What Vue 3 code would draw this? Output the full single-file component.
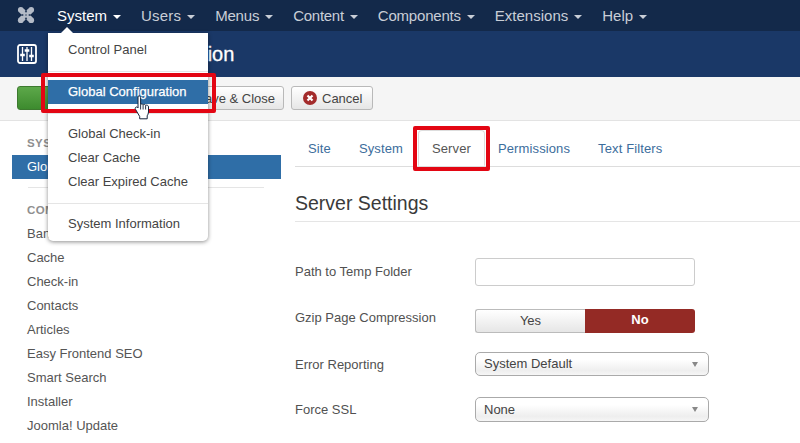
<script setup>
const nav = ['System', 'Users', 'Menus', 'Content', 'Components', 'Extensions', 'Help']
const tabs = ['Site', 'System', 'Server', 'Permissions', 'Text Filters']
const comps = ['Banners', 'Cache', 'Check-in', 'Contacts', 'Articles', 'Easy Frontend SEO', 'Smart Search', 'Installer', 'Joomla! Update']
</script>

<template>
  <div class="page">
    <header class="navbar">
      <svg class="logo" viewBox="0 0 18 18" width="18" height="18">
        <path d="M4.500 4.500 L13.500 13.500 M13.500 4.500 L4.500 13.500" fill="none" stroke="#b4bbc7" stroke-width="6" />
        <g fill="#b4bbc7">
          <circle cx="3.800" cy="3.800" r="2.900" />
          <circle cx="14.200" cy="3.800" r="2.900" />
          <circle cx="3.800" cy="14.200" r="2.900" />
          <circle cx="14.200" cy="14.200" r="2.900" />
        </g>
        <g fill="#13294a" opacity=".8">
          <circle cx="9" cy="5.400" r="1.100" />
          <circle cx="9" cy="12.600" r="1.100" />
          <circle cx="5.400" cy="9" r="1.100" />
          <circle cx="12.600" cy="9" r="1.100" />
          <circle cx="9" cy="9" r=".8" />
        </g>
      </svg>
      <nav class="menu">
        <span v-for="(n, i) in nav" :key="n" class="menu-item" :class="{ open: i === 0 }">{{ n }}<i class="caret"></i></span>
      </nav>
    </header>

    <div class="subhead">
      <svg class="cfg-icon" viewBox="0 0 20 20" width="20" height="20">
        <rect x="1" y="1" width="18" height="18" rx="2" fill="none" stroke="#fff" stroke-width="1.800" />
        <path d="M5.500 3v14M10 3v14M14.500 3v14" stroke="#fff" stroke-width="1.300" />
        <path d="M3.200 11h4.600M7.700 6.500h4.600M12.200 12h4.600" stroke="#fff" stroke-width="2.600" />
      </svg>
      <h1 class="title">Global Configuration</h1>
    </div>

    <div class="toolbar">
      <button class="btn btn-green"></button>
      <button class="btn btn-save">Save &amp; Close</button>
      <button class="btn btn-cancel">
        <svg class="x-badge" viewBox="0 0 14 14" width="14" height="14">
          <circle cx="7" cy="7" r="7" fill="#a32b2b" />
          <path d="M4.500 4.500l5 5M9.500 4.500l-5 5" stroke="#fff" stroke-width="2.200" />
        </svg>
        Cancel
      </button>
    </div>

    <div class="body">
      <aside class="side">
        <div class="side-head first">SYSTEM</div>
        <div class="side-active">Global Configuration</div>
        <div class="side-rule"></div>
        <div class="side-head second">COMPONENT</div>
        <div v-for="c in comps" :key="c" class="side-link">{{ c }}</div>
      </aside>

      <main class="main">
        <div class="tabs">
          <span v-for="t in tabs" :key="t" class="tab" :class="{ active: t === 'Server' }">{{ t }}</span>
        </div>
        <h2 class="legend">Server Settings</h2>
        <div class="form">
          <div class="row r1">
            <label>Path to Temp Folder</label>
            <div class="text-input"></div>
          </div>
          <div class="row r2">
            <label>Gzip Page Compression</label>
            <div class="toggle"><span class="yes">Yes</span><span class="no">No</span></div>
          </div>
          <div class="row r3">
            <label>Error Reporting</label>
            <div class="select">System Default<i class="sel-arrow"></i></div>
          </div>
          <div class="row r4">
            <label>Force SSL</label>
            <div class="select">None<i class="sel-arrow"></i></div>
          </div>
        </div>
      </main>
    </div>

    <div class="dropdown">
      <i class="dd-tip"></i>
      <div class="dd-item">Control Panel</div>
      <div class="dd-rule"></div>
      <div class="dd-item hot">Global Configuration</div>
      <div class="dd-rule"></div>
      <div class="dd-item">Global Check-in</div>
      <div class="dd-item">Clear Cache</div>
      <div class="dd-item">Clear Expired Cache</div>
      <div class="dd-rule"></div>
      <div class="dd-item">System Information</div>
    </div>

    <div class="mark mark-menu"></div>
    <div class="mark mark-tab"></div>

    <svg class="hand" viewBox="0 0 18 25" width="18" height="25">
      <path d="M4 1.500c.9-1 2.600-.6 2.600 1v7c.9-.8 2-.6 2.500.3.900-.7 2.100-.4 2.500.5 1-.5 2.900 0 2.900 1.500v5.200c0 1.700-.7 2.700-1.300 3.800v3H5.700v-2.300L1.600 14.500c-1.200-1.500.4-3.200 1.900-2.200L4 13Z" fill="#fff" stroke="#14233b" stroke-width="1" />
      <path d="M6.600 9.500v5M9.100 10v4.500M11.600 10.500v4" stroke="#14233b" stroke-width=".9" fill="none" />
    </svg>
  </div>
</template>

<style>
html, body { margin: 0; background: #fff; }
</style>

<style scoped>
.page {
  position: relative;
  width: 800px;
  height: 443px;
  overflow: hidden;
  background: #fff;
  font-family: "Liberation Sans", Arial, sans-serif;
  font-size: 13px;
  color: #515151;
}
.navbar {
  height: 31px;
  box-sizing: border-box;
  background: #13294a;
  display: flex;
  align-items: center;
  padding: 0 0 1px 17px;
}
.logo { flex: none; }
.menu { display: flex; margin-left: 22px; font-size: 15px; color: #c9ced7; }
.menu-item { margin-right: 20px; white-space: nowrap; }
.menu-item.open { color: #fff; }
.menu-item:nth-child(2) { letter-spacing: .2px; }
.menu-item:nth-child(3) { letter-spacing: -.2px; }
.menu-item:nth-child(4) { letter-spacing: -.28px; }
.menu-item:nth-child(5) { letter-spacing: -.2px; }
.caret {
  display: inline-block;
  margin-left: 6px;
  vertical-align: 2px;
  border-left: 4px solid transparent;
  border-right: 4px solid transparent;
  border-top: 4px solid currentColor;
}
.subhead {
  height: 46px;
  background: #1a3867;
  display: flex;
  align-items: center;
  padding-left: 17px;
}
.cfg-icon { flex: none; }
.title {
  margin: 0 0 0 15px;
  font-size: 20px;
  font-weight: 400;
  color: #fff;
  -webkit-text-stroke: .3px #fff;
  white-space: nowrap;
}
.toolbar {
  height: 44px;
  box-sizing: border-box;
  background: #f5f5f5;
  border-bottom: 1px solid #e3e3e3;
  display: flex;
  align-items: center;
  padding: 0 0 1px 17px;
}
.btn {
  height: 24px;
  box-sizing: border-box;
  border: 1px solid #b9b9b9;
  border-radius: 3px;
  background: linear-gradient(#fff, #e6e6e6);
  font: 13px "Liberation Sans", Arial, sans-serif;
  color: #444;
  padding: 0;
}
.btn-green {
  width: 70px;
  background: linear-gradient(#5da84a, #3d8b2e);
  border-color: #3d7a2f;
}
.btn-save {
  width: 191px;
  margin-left: 6px;
  text-align: right;
  padding-right: 8px;
}
.btn-cancel {
  width: 82px;
  margin-left: 7px;
  display: flex;
  align-items: center;
  padding-left: 11px;
  gap: 5px;
}
.x-badge { flex: none; }
.body { display: flex; }
.side { width: 281px; flex: none; padding-left: 12px; box-sizing: border-box; }
.side-head {
  padding-left: 15px;
  font-size: 11.500px;
  font-weight: 700;
  color: #8f8f8f;
  letter-spacing: .4px;
  line-height: 17px;
}
.side-head.first { margin-top: 14px; }
.side-head.second { margin-top: 14px; margin-bottom: 3px; }
.side-active {
  margin-top: 3px;
  height: 24px;
  line-height: 24px;
  padding-left: 15px;
  background: #2f6ea7;
  color: #fff;
}
.side-rule { margin: 8px 17px 0 16px; height: 1px; background: #e5e5e5; }
.side-link { height: 24px; line-height: 24px; padding-left: 15px; color: #555; }
.main { flex: 1; padding-left: 14px; min-width: 0; }
.tabs {
  margin-top: 10px;
  height: 36px;
  box-sizing: border-box;
  border-bottom: 1px solid #ddd;
  display: flex;
  align-items: flex-end;
}
.tab {
  height: 35px;
  line-height: 35px;
  padding: 0 14px;
  color: #3c6d9c;
  letter-spacing: .12px;
  box-sizing: border-box;
  white-space: nowrap;
}
.tab:first-child { margin-left: -1px; }
.tab.active {
  height: 36px;
  padding: 0 13px;
  margin: 0 -1px 0 1px;
  border: 1px solid #ddd;
  border-bottom-color: #fff;
  border-radius: 4px 4px 0 0;
  background: #fff;
  color: #555;
}
.legend {
  margin: 0;
  padding: 0;
  height: 55px;
  line-height: 73px;
  box-sizing: border-box;
  border-bottom: 1px solid #e5e5e5;
  font-size: 19.500px;
  font-weight: 400;
  color: #3a3a3a;
}
.form { display: flex; flex-direction: column; }
.row { display: flex; align-items: center; }
.row label { width: 180px; flex: none; color: #515151; }
.r1 { margin-top: 36px; height: 28px; }
.r1 label { margin-bottom: 2px; }
.r2 { margin-top: 23px; height: 24px; }
.r2 label { margin-bottom: 8px; }
.r3 { margin-top: 19px; height: 24px; }
.r4 { margin-top: 21px; height: 25px; }
.text-input {
  width: 220px;
  height: 28px;
  box-sizing: border-box;
  border: 1px solid #ccc;
  border-radius: 3px;
}
.toggle {
  display: flex;
  width: 220px;
  height: 24px;
  box-sizing: border-box;
  text-align: center;
  line-height: 22px;
}
.yes {
  width: 110px;
  box-sizing: border-box;
  border: 1px solid #bbb;
  border-right: 0;
  border-radius: 3px 0 0 3px;
  background: linear-gradient(#fff, #e6e6e6);
  color: #444;
}
.no {
  width: 110px;
  background: #942a25;
  color: #fff;
  font-weight: 700;
  border-radius: 0 3px 3px 0;
}
.select {
  position: relative;
  width: 234px;
  height: 24px;
  line-height: 22px;
  box-sizing: border-box;
  border: 1px solid #aaa;
  border-radius: 5px;
  padding-left: 8px;
  background: linear-gradient(#fff 30%, #eee 80%, #f6f6f6);
  color: #444;
}
.r4 .select { height: 25px; line-height: 23px; }
.sel-arrow {
  position: absolute;
  right: 10px;
  top: 9px;
  border-left: 3.500px solid transparent;
  border-right: 3.500px solid transparent;
  border-top: 5px solid #888;
}
.dropdown {
  position: absolute;
  left: 48px;
  top: 33px;
  width: 160px;
  box-sizing: border-box;
  padding: 5px 0;
  background: #fff;
  border-radius: 0 0 5px 5px;
  box-shadow: 0 1px 4px rgba(0, 0, 0, .45);
  z-index: 2;
}
.dd-tip {
  position: absolute;
  left: 13px;
  top: -6px;
  border-left: 6px solid transparent;
  border-right: 6px solid transparent;
  border-bottom: 6px solid #fff;
}
.dd-item {
  height: 24px;
  line-height: 24px;
  padding-left: 20px;
  color: #444;
  white-space: nowrap;
}
.dd-item.hot { background: #2f6ea7; color: #fff; -webkit-text-stroke: .25px #fff; }
.dd-rule { height: 1px; margin: 9px 0 8px; background: #e5e5e5; }
.mark {
  position: absolute;
  box-sizing: border-box;
  border: 4px solid #e30613;
  border-radius: 2px;
  z-index: 3;
}
.mark-menu { left: 41px; top: 73px; width: 175px; height: 40px; }
.mark-tab { left: 413px; top: 126px; width: 77px; height: 45px; }
.hand { position: absolute; left: 134px; top: 95px; z-index: 4; }
</style>
